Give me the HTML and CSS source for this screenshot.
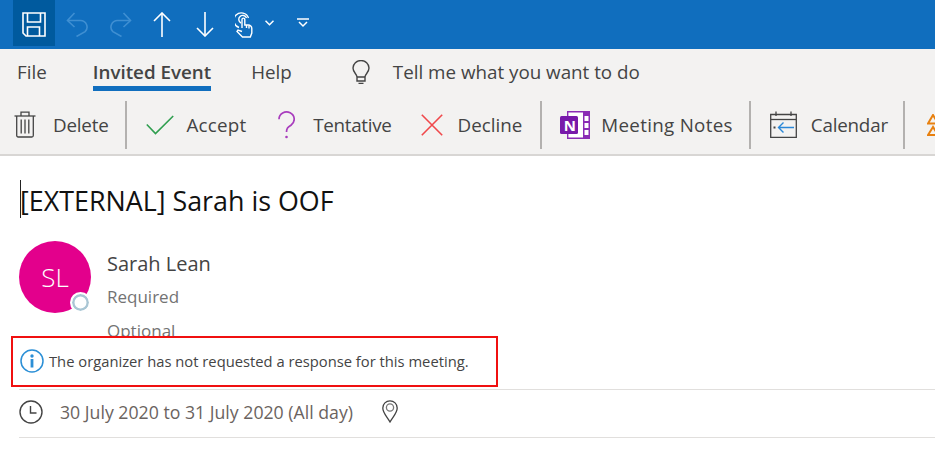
FILE: index.html
```html
<!DOCTYPE html>
<html lang="en">
<head>
<meta charset="utf-8">
<title>Invited Event</title>
<link rel="stylesheet" href="styles.css">
</head>
<body>
<div class="window">
  <header class="titlebar">
    <button class="qat qat-save"><svg width="24" height="25" viewBox="0 0 24 25" fill="none" stroke="#fff" stroke-width="1.600"><path d="M1 1H23V24H4L1 21Z"/><path d="M5.500 1V10H18.500V1"/><path d="M5.500 24V15H17.500V24"/></svg></button>
    <span class="qat qat-undo"><svg width="23" height="25" viewBox="0 0 23 25" fill="none" stroke="#3f8fd2" stroke-width="1.600"><path d="M2 8.500H14.500a6.500 6.500 0 0 1 4.600 11.100L10.500 24.500"/><path d="M8.500 1L1.500 8.500L8.500 15"/></svg></span>
    <span class="qat qat-redo"><svg width="23" height="25" viewBox="0 0 23 25" fill="none" stroke="#3f8fd2" stroke-width="1.600"><path d="M21 8.500H8.500a6.500 6.500 0 0 0-4.600 11.100L12.500 24.500"/><path d="M14.500 1L21.500 8.500L14.500 15"/></svg></span>
    <span class="qat qat-up"><svg width="18" height="25" viewBox="0 0 18 25" fill="none" stroke="#fff" stroke-width="1.600"><path d="M9 1V25"/><path d="M1 9L9 1L17 9"/></svg></span>
    <span class="qat qat-down"><svg width="18" height="25" viewBox="0 0 18 25" fill="none" stroke="#fff" stroke-width="1.600"><path d="M9 0V24"/><path d="M1 16L9 24L17 16"/></svg></span>
    <span class="qat qat-touch"><svg width="18" height="26" viewBox="0 0 18 26" fill="none" stroke="#fff" stroke-width="1.400"><path d="M4 15.500A7.500 7.500 0 1 1 13.500 6"/><path d="M6 11A4 4 0 1 1 11.500 6"/><path d="M7 16V7.500a1.400 1.400 0 0 1 2.800 0V13h3.500a3.500 3.500 0 0 1 3.500 3.500V21l-1.500 4H7.500L2 19.500l1-1.500 4 1.500"/><path d="M11.500 13v3M14 13.500v3"/></svg></span>
    <span class="qat qat-chev"><svg width="9" height="6" viewBox="0 0 9 6" fill="none" stroke="#fff" stroke-width="1.500"><path d="M.5 .8L4.500 4.800L8.500 .8"/></svg></span>
    <span class="qat qat-more"><svg width="12" height="10" viewBox="0 0 12 10" fill="none" stroke="#fff" stroke-width="1.500"><path d="M0 1H12"/><path d="M2 4L6 8L10 4"/></svg></span>
  </header>

  <nav class="menubar">
    <span class="tab tab-file">File</span>
    <span class="tab tab-active">Invited Event</span>
    <span class="tab tab-help">Help</span>
    <svg class="bulb" width="18" height="24" viewBox="0 0 18 24" fill="none" stroke="#444" stroke-width="1.400"><path d="M5 21V17C5 14 1 12.500 1 8a8 7.500 0 0 1 16 0C17 12.500 13 14 13 17V21Z"/><path d="M5 17H13M6.500 23.500H11.500"/></svg>
    <span class="tell">Tell me what you want to do</span>
  </nav>

  <div class="ribbon">
    <span class="item item-delete">
      <svg width="22" height="27" viewBox="0 0 22 27" fill="none" stroke="#444" stroke-width="1.300"><path d="M.5 5H21.500"/><path d="M7 5V1.200H15V5"/><path d="M2.700 5V24.500a1.500 1.500 0 0 0 1.500 1.500H17.800a1.500 1.500 0 0 0 1.500-1.500V5"/><path d="M7.200 8.500V22.500M11 8.500V22.500M14.800 8.500V22.500"/></svg>
      <span class="label label-delete">Delete</span>
    </span>
    <i class="sep sep-1"></i>
    <span class="item item-accept">
      <svg width="28" height="20" viewBox="0 0 28 20" fill="none" stroke="#2f9e4f" stroke-width="1.600"><path d="M.8 9.500L9.500 18.500L27.200 1"/></svg>
      <span class="label label-accept">Accept</span>
    </span>
    <span class="item item-tentative">
      <svg width="17" height="28" viewBox="0 0 17 28" fill="none" stroke="#a83dbd" stroke-width="1.700"><path d="M1 8.200a7.600 7.300 0 1 1 12 6C10 16.200 8.500 17 8.500 21"/><circle cx="8.500" cy="26" r="1.300" fill="#a83dbd" stroke="none"/></svg>
      <span class="label label-tentative">Tentative</span>
    </span>
    <span class="item item-decline">
      <svg width="22" height="22" viewBox="0 0 22 22" fill="none" stroke="#f0484b" stroke-width="1.600"><path d="M.8 .8L21.200 21.200M21.200 .8L.8 21.200"/></svg>
      <span class="label label-decline">Decline</span>
    </span>
    <i class="sep sep-2"></i>
    <span class="item item-notes">
      <svg width="30" height="28" viewBox="0 0 30 28" fill="none"><path d="M7.700 .7H29.300V27.300H7.700Z" stroke="#8a2bb5" stroke-width="1.400" fill="#fff"/><rect x="23" y="1" width="6" height="26" fill="#8a2bb5"/><rect x="24.500" y="5" width="4" height="5" fill="#fff"/><rect x="24.500" y="12" width="4" height="5" fill="#fff"/><rect x="24.500" y="19" width="4" height="5" fill="#fff"/><rect y="5" width="18" height="18" rx="1.500" fill="#7719aa"/><text x="3.800" y="19.500" class="onenote-n">N</text></svg>
      <span class="label label-notes">Meeting Notes</span>
    </span>
    <i class="sep sep-3"></i>
    <span class="item item-calendar">
      <svg width="27" height="27" viewBox="0 0 27 27" fill="none"><path d="M.7 3.500H26.300V26.300H.7Z" stroke="#444" stroke-width="1.300"/><path d="M1 8.500H26" stroke="#444" stroke-width="1.300"/><path d="M6 .5V5M21 .5V5" stroke="#444" stroke-width="1.300"/><rect x="3.500" y="15.500" width="2" height="2" fill="#444"/><path d="M24 16.500H8.500M13.500 11.500L8.500 16.500L13.500 21.500" stroke="#2b88d8" stroke-width="1.400"/></svg>
      <span class="label label-calendar">Calendar</span>
    </span>
    <i class="sep sep-4"></i>
    <svg class="warn" width="12" height="22" viewBox="0 0 12 22" fill="none" stroke="#e8800f" stroke-width="2"><path d="M6 1L1 9.500H11Z"/><path d="M6 13L1 21H11Z"/></svg>
  </div>

  <main class="content">
    <h1 class="subject"><i class="caret"></i>[EXTERNAL] Sarah is OOF</h1>

    <section class="person">
      <div class="avatar">SL<span class="presence"></span></div>
      <div class="attendees">
        <div class="name">Sarah Lean</div>
        <div class="role role-required">Required</div>
        <div class="role role-optional">Optional</div>
      </div>
    </section>

    <div class="notice">
      <svg width="24" height="24" viewBox="0 0 24 24" fill="none"><circle cx="12" cy="12" r="11" stroke="#2b8fd6" stroke-width="1.500"/><rect x="10.600" y="10" width="2.800" height="8.500" fill="#2b8fd6"/><circle cx="12" cy="7" r="1.700" fill="#2b8fd6"/></svg>
      <span>The organizer has not requested a response for this meeting.</span>
    </div>

    <div class="when">
      <svg width="24" height="24" viewBox="0 0 24 24" fill="none" stroke="#444" stroke-width="1.400"><circle cx="12" cy="12" r="11"/><path d="M11.500 6V13H17.500"/></svg>
      <span class="when-text">30 July 2020 to 31 July 2020 (All day)</span>
      <svg class="pin" width="16" height="23" viewBox="0 0 16 23" fill="none" stroke="#444" stroke-width="1.300"><path d="M8 22C5 16.500 .8 13 .8 8a7.200 7.200 0 0 1 14.400 0C15.200 13 11 16.500 8 22Z"/><circle cx="8" cy="7.500" r="3.600" stroke="#777"/></svg>
    </div>
  </main>

  <div class="callout"></div>
</div>
</body>
</html>
```

FILE: styles.css
```css
* { box-sizing: border-box; }
html, body { margin: 0; padding: 0; background: #fff; }
body { font-family: "Open Sans", "Noto Sans", "Liberation Sans", sans-serif; color: #444; }
.window { position: relative; width: 935px; height: 465px; overflow: hidden; }

.titlebar { display: flex; align-items: center; height: 49px; background: #106ebe; padding: 0 0 0 13px; }
.qat { display: flex; align-items: center; justify-content: center; flex: none; }
.qat-save { width: 42px; height: 46px; align-self: flex-start; background: #005a9e; border: 0; padding: 3px 0 0; }
.qat-undo { margin-left: 11px; }
.qat-redo { margin-left: 20px; }
.qat-up { margin-left: 21px; }
.qat-down { margin-left: 25px; }
.qat-touch { margin-left: 21px; }
.qat-chev { margin-left: 12px; margin-bottom: 3px; }
.qat-more { margin-left: 23px; margin-bottom: 3px; }

.menubar { display: flex; align-items: center; height: 46px; background: #f3f2f1; padding: 0 0 0 17px; font-size: 18.800px; }
.tab { color: #444; line-height: 46px; }
.tab-active { margin-left: 46px; font-weight: 600; position: relative; }
.tab-active::after { content: ""; position: absolute; left: 0; right: 0; bottom: 4px; height: 5px; background: #106ebe; }
.tab-help { margin-left: 40px; }
.bulb { margin-left: 60px; flex: none; }
.tell { margin-left: 23px; }

.ribbon { display: flex; align-items: center; height: 61px; background: #f3f2f1; border-bottom: 2px solid #d8d6d4; padding: 0 0 0 14px; font-size: 18.800px; }
.item { display: flex; align-items: center; flex: none; }
.item svg { flex: none; }
.label { color: #444; }
.label-delete { margin-left: 17px; letter-spacing: -.2px; }
.label-accept { margin-left: 13px; letter-spacing: .2px; }
.label-tentative { margin-left: 18px; letter-spacing: -.3px; }
.label-decline { margin-left: 15px; }
.label-notes { margin-left: 11px; letter-spacing: .3px; }
.label-calendar { margin-left: 14px; letter-spacing: -.2px; }
.sep { flex: none; display: block; width: 2px; height: 48px; background: #b3b1af; }
.sep-1 { margin-left: 16px; }
.item-accept { margin-left: 19px; }
.item-tentative { margin-left: 32px; }
.item-decline { margin-left: 29px; }
.sep-2 { margin-left: 18px; }
.item-notes { margin-left: 18px; }
.sep-3 { margin-left: 16px; }
.item-calendar { margin-left: 19px; }
.sep-4 { margin-left: 15px; }
.warn { flex: none; margin-left: 22px; }
.onenote-n { font-size: 15px; font-weight: 700; fill: #fff; font-family: "Open Sans", sans-serif; }

.content { padding: 0 0 0 19px; }
.subject { position: relative; margin: 25px 0 0 1px; font-size: 26.850px; font-weight: 400; line-height: 40px; color: #111; }
.caret { position: absolute; left: 0; top: -1px; width: 1px; height: 38px; background: #222; }

.person { display: flex; margin-top: 20px; height: 95px; }
.avatar { position: relative; width: 72px; height: 72px; border-radius: 50%; background: #e3008c; color: #fff; font-size: 26px; font-weight: 300; display: flex; align-items: center; justify-content: center; flex: none; }
.presence { position: absolute; right: 0; bottom: 0; width: 21px; height: 21px; border-radius: 50%; background: #fff; border: 2px solid #fff; box-shadow: inset 0 0 0 2.500px #a9c6d4; }
.attendees { margin-left: 16px; }
.name { font-size: 20px; line-height: 28px; margin-top: 9px; color: #444; }
.role { font-size: 17px; line-height: 34px; color: #737373; }
.role-required { margin-top: 2px; }

.notice { position: relative; display: flex; align-items: center; height: 53px; padding: 1px 0 5px 1px; background: #fff; font-size: 14.750px; color: #444; }
.notice svg { flex: none; }
.notice span { margin-left: 5px; }

.when { display: flex; align-items: center; height: 49px; padding-bottom: 4px; border-top: 1px solid #e1dfdd; border-bottom: 1px solid #e1dfdd; font-size: 17.700px; color: #6b6360; }
.when svg { flex: none; }
.when-text { margin-left: 17px; }
.pin { margin-left: 29px; }

.callout { position: absolute; left: 11px; top: 336px; width: 487px; height: 51px; border: 2px solid #f01010; }
```
